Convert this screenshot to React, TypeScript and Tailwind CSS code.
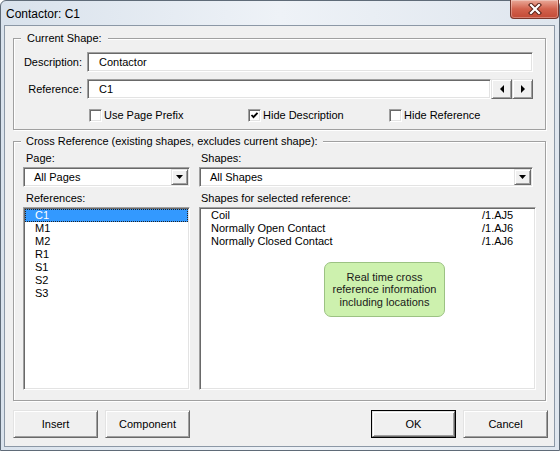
import React from 'react';

// classic 3D edges
const raised =
    'border border-t-[#e3e3e3] border-l-[#e3e3e3] border-b-[#696969] border-r-[#696969] shadow-[inset_1px_1px_0_#fff,inset_-1px_-1px_0_#a0a0a0] bg-[#f0f0f0]';
const sunken =
    'border border-t-[#a0a0a0] border-l-[#a0a0a0] border-b-white border-r-white shadow-[inset_1px_1px_0_#696969,inset_-1px_-1px_0_#e3e3e3] bg-white';
const etched = 'border border-[#a0a0a0] shadow-[inset_1px_1px_0_#fff,1px_1px_0_#fff]';

function DownArrow() {
    return (
        <svg width="7" height="4" viewBox="0 0 7 4">
            <polygon points="0,0 7,0 3.5,4" fill="#000" />
        </svg>
    );
}

function CheckItem({ label, checked = false, width }: { label: string; checked?: boolean; width?: string }) {
    return (
        <div className={`flex items-center h-[13px] ${width ?? ''}`}>
            <div className={`w-[13px] h-[13px] ${sunken} flex items-center justify-center`}>
                {checked && (
                    <svg width="9" height="9" viewBox="0 0 9 9">
                        <polyline points="1.5,4 3.5,6.2 7.5,1.8" fill="none" stroke="#000" strokeWidth="1.8" />
                    </svg>
                )}
            </div>
            <span className="ml-[2px]">{label}</span>
        </div>
    );
}

function Combo({ text, width }: { text: string; width: string }) {
    return (
        <div className={`${width} h-[20px] mt-[2px] ${sunken} p-[1px] flex items-center`}>
            <span className="flex-1 pl-[9px]">{text}</span>
            <div className={`w-[17px] h-[16px] ${raised} flex items-center justify-center`}>
                <DownArrow />
            </div>
        </div>
    );
}

function DlgButton({ label, isDefault = false }: { label: string; isDefault?: boolean }) {
    if (isDefault) {
        return (
            <div className="w-[85px] h-[28px] border border-black flex">
                <div className={`flex-1 ${raised} flex items-center justify-center`}>{label}</div>
            </div>
        );
    }
    return <div className={`w-[85px] h-[28px] ${raised} flex items-center justify-center`}>{label}</div>;
}

const references = ['C1', 'M1', 'M2', 'R1', 'S1', 'S2', 'S3'];
const shapes = [
    { name: 'Coil', loc: '/1.AJ5' },
    { name: 'Normally Open Contact', loc: '/1.AJ6' },
    { name: 'Normally Closed Contact', loc: '/1.AJ6' },
];

export default function App() {
    return (
        <div className="w-[560px] h-[451px] font-['Liberation_Sans',Arial,sans-serif] text-[11px] leading-[13px] text-black">
            <div className="w-full h-full flex flex-col rounded-t-[6px] border border-[#5f6b78] bg-gradient-to-r from-[#d9e2ec] via-[#eef2f7] to-[#dfe6ee] pl-[3px] pr-[4px] pb-[3px]">
                {/* Title bar */}
                <div className="h-[24px] flex items-start justify-between">
                    <span className="mt-[6px] ml-[2px] text-[12px] leading-[14px]">Contactor: C1</span>
                    <div className="-mt-[1px] -mr-[4px] w-[49px] h-[19px] rounded-b-[4px] border border-t-0 border-[#7a3529] bg-gradient-to-b from-[#e9a999] via-[#d2624d] to-[#c34a35] shadow-[inset_0_0_0_1px_rgba(255,255,255,0.3)] flex items-center justify-center">
                        <svg width="16" height="12" viewBox="0 0 16 12">
                            <path d="M4 2 L12 10 M12 2 L4 10" stroke="#5a2218" strokeWidth="4.2" strokeLinecap="square" />
                            <path d="M4 2 L12 10 M12 2 L4 10" stroke="#fff" strokeWidth="2.2" strokeLinecap="square" />
                        </svg>
                    </div>
                </div>

                {/* Client area */}
                <div className="flex-1 border border-[#8c98a6] bg-[#f0f0f0] flex flex-col">
                    {/* Current Shape */}
                    <div className={`relative mt-[12px] mx-[8px] h-[92px] ${etched}`}>
                        <span className="absolute -top-[7px] left-[7px] px-[6px] bg-[#f0f0f0]">Current Shape:</span>
                        <div className="pt-[13px] flex flex-col">
                            <div className="flex items-center h-[20px]">
                                <span className="w-[68px] text-right">Description:</span>
                                <div className={`ml-[5px] w-[446px] h-[20px] ${sunken} flex items-center pl-[11px]`}>
                                    Contactor
                                </div>
                            </div>
                            <div className="mt-[7px] flex items-center h-[20px]">
                                <span className="w-[68px] text-right">Reference:</span>
                                <div className={`ml-[5px] w-[404px] h-[20px] ${sunken} flex items-center pl-[11px]`}>
                                    C1
                                </div>
                                <div className={`w-[21px] h-[20px] ${raised} flex items-center justify-center`}>
                                    <svg width="4" height="8" viewBox="0 0 4 8">
                                        <polygon points="4,0 4,8 0,4" fill="#000" />
                                    </svg>
                                </div>
                                <div className={`w-[21px] h-[20px] ${raised} flex items-center justify-center`}>
                                    <svg width="4" height="8" viewBox="0 0 4 8">
                                        <polygon points="0,0 0,8 4,4" fill="#000" />
                                    </svg>
                                </div>
                            </div>
                            <div className="mt-[10px] flex pl-[75px]">
                                <CheckItem label="Use Page Prefix" width="w-[159px]" />
                                <CheckItem label="Hide Description" checked width="w-[141px]" />
                                <CheckItem label="Hide Reference" />
                            </div>
                        </div>
                    </div>

                    {/* Cross Reference */}
                    <div className={`relative mt-[11px] mx-[8px] h-[260px] ${etched}`}>
                        <span className="absolute -top-[7px] left-[7px] px-[5px] bg-[#f0f0f0]">
                            Cross Reference (existing shapes, excludes current shape):
                        </span>
                        <div className="pt-[10px] pl-[9px] flex gap-[9px]">
                            <div className="w-[167px] flex flex-col">
                                <span className="pl-[3px] h-[13px]">Page:</span>
                                <Combo text="All Pages" width="w-[167px]" />
                                <span className="mt-[5px] pl-[3px] h-[13px]">References:</span>
                                <div className={`mt-[2px] h-[183px] ${sunken} p-[1px] flex flex-col`}>
                                    {references.map((r, i) => (
                                        <div
                                            key={r}
                                            className={
                                                i === 0
                                                    ? 'h-[13px] leading-[11px] pl-[9px] border border-dotted border-[#222] bg-[#3399ff] text-white'
                                                    : 'h-[13px] leading-[11px] pl-[9px] border border-transparent'
                                            }
                                        >
                                            {r}
                                        </div>
                                    ))}
                                </div>
                            </div>
                            <div className="w-[337px] flex flex-col">
                                <span className="pl-[2px] h-[13px]">Shapes:</span>
                                <Combo text="All Shapes" width="w-[334px]" />
                                <span className="mt-[5px] pl-[2px] h-[13px]">Shapes for selected reference:</span>
                                <div className={`relative mt-[2px] h-[183px] ${sunken} p-[1px] flex flex-col`}>
                                    {shapes.map((s) => (
                                        <div key={s.name} className="h-[13px] leading-[13px] pl-[10px] flex">
                                            <span className="w-[271px]">{s.name}</span>
                                            <span>{s.loc}</span>
                                        </div>
                                    ))}
                                    <div className="absolute left-[124px] top-[54px] w-[121px] h-[55px] rounded-[7px] border border-[#9cc283] bg-[#cdf1ae] flex items-center justify-center text-center leading-[12.5px] text-[#1a1a1a]">
                                        Real time cross
                                        <br />
                                        reference information
                                        <br />
                                        including locations
                                    </div>
                                </div>
                            </div>
                        </div>
                    </div>

                    {/* Buttons */}
                    <div className="mt-[9px] h-[28px] flex pl-[8px] pr-[6px]">
                        <DlgButton label="Insert" />
                        <div className="ml-[7px]">
                            <DlgButton label="Component" />
                        </div>
                        <div className="flex-1" />
                        <DlgButton label="OK" isDefault />
                        <div className="ml-[7px]">
                            <DlgButton label="Cancel" />
                        </div>
                    </div>
                </div>
            </div>
        </div>
    );
}
